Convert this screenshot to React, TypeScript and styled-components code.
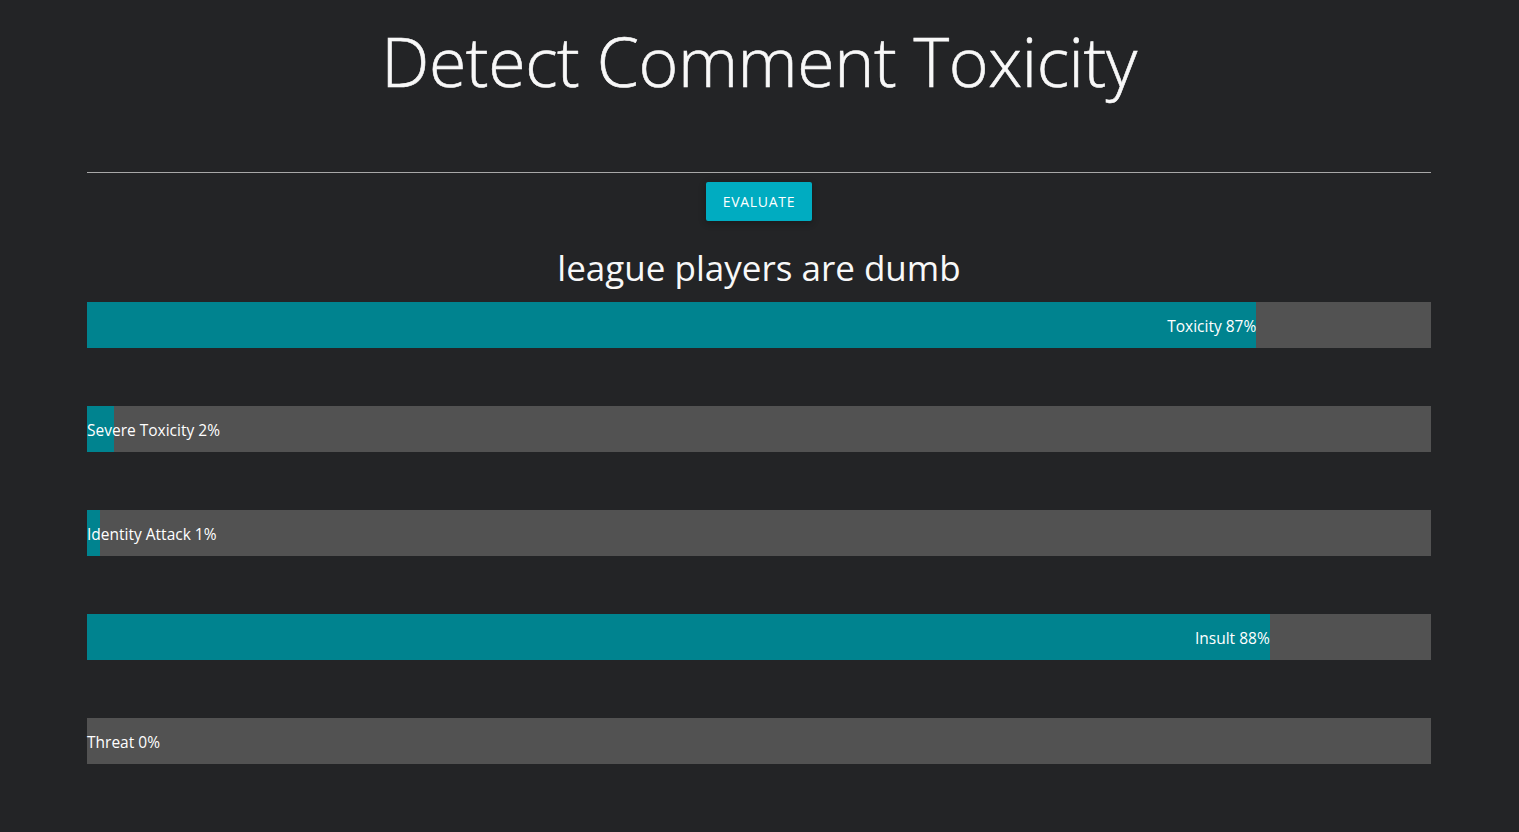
import React from "react";
import styled, { createGlobalStyle } from "styled-components";

const Global = createGlobalStyle`
  html, body { margin: 0; padding: 0; background: #232426; }
  body { font-family: "Open Sans", "Noto Sans", sans-serif; color: #fff; }
`;

const Page = styled.main`
  min-height: 832px;
  padding: 0 88px 0 87px;
  box-sizing: border-box;
  display: flex;
  flex-direction: column;
`;

const Title = styled.h1`
  margin: 21px 0 0;
  height: 151px;
  text-align: center;
  font-weight: 300;
  font-size: 68px;
  line-height: 80px;
  letter-spacing: -0.4px;
  color: #f8f8f8;
  -webkit-text-stroke: 0.6px #f8f8f8;
`;

const Rule = styled.hr`
  margin: 0;
  border: 0;
  border-top: 1px solid #a8a8a8;
`;

const Actions = styled.div`
  display: flex;
  justify-content: center;
  padding-top: 9px;
`;

const Button = styled.button`
  width: 106px;
  height: 39px;
  border: 0;
  border-radius: 2px;
  background: #00acc1;
  color: #fff;
  font-family: "Open Sans", sans-serif;
  font-size: 14px;
  letter-spacing: 0.7px;
  box-shadow: 0 2px 5px rgba(0, 0, 0, 0.16), 0 2px 10px rgba(0, 0, 0, 0.12);
  cursor: pointer;
`;

const Comment = styled.h2`
  margin: 23px 0 10px;
  text-align: center;
  font-weight: 400;
  font-size: 35px;
  line-height: 48px;
  color: #f8f8f8;
`;

const Bars = styled.div`
  display: flex;
  flex-direction: column;
  gap: 58px;
`;

const Track = styled.div`
  height: 46px;
  background: #525252;
  display: flex;
`;

const Fill = styled.div`
  height: 100%;
  background: #00838f;
  text-align: right;
  white-space: nowrap;
  font-size: 15.5px;
  line-height: 48px;
  color: #fff;
`;

const scores = [
  { label: "Toxicity", pct: 87 },
  { label: "Severe Toxicity", pct: 2 },
  { label: "Identity Attack", pct: 1 },
  { label: "Insult", pct: 88 },
  { label: "Threat", pct: 0 },
];

export default function App() {
  return (
    <>
      <Global />
      <Page>
        <Title>Detect Comment Toxicity</Title>
        <Rule />
        <Actions>
          <Button>EVALUATE</Button>
        </Actions>
        <Comment>league players are dumb</Comment>
        <Bars>
          {scores.map((s) => (
            <Track key={s.label}>
              <Fill style={{ width: `${s.pct}%` }}>
                {s.label} {s.pct}%
              </Fill>
            </Track>
          ))}
        </Bars>
      </Page>
    </>
  );
}
